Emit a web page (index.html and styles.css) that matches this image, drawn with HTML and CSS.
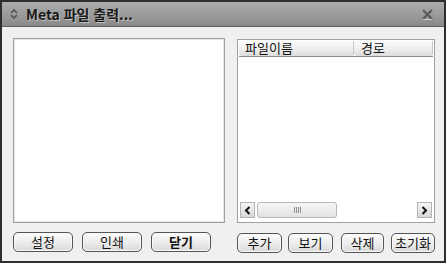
FILE: index.html
```html
<!DOCTYPE html>
<html lang="ko">
<head>
	<meta charset="UTF-8">
	<title>Meta 파일 출력</title>
	<link rel="stylesheet" href="styles.css">
</head>
<body>
	<div class="win">
		<div class="titlebar">
			<svg class="t_icon" width="8" height="12" viewBox="0 0 8 12"><path d="M1 5 L4 2 L7 5 M1 7 L4 10 L7 7" fill="none" stroke="#555" stroke-width="1.6"/></svg>
			<span class="t_text">Meta 파일 출력...</span>
			<svg class="t_close" width="11" height="11" viewBox="0 0 11 11"><path d="M1 1 L10 10 M10 1 L1 10" stroke="#5a5a5a" stroke-width="2.2"/><path d="M1 10.5 L10 10.5" stroke="#c8c8c8" stroke-width="1"/></svg>
		</div>
		<div class="content">
			<div class="col col_left">
				<div class="panel preview"></div>
				<div class="btns">
					<a href="javascript:;" class="btn w60">설정</a>
					<a href="javascript:;" class="btn w60">인쇄</a>
					<a href="javascript:;" class="btn w60 bold">닫기</a>
				</div>
			</div>
			<div class="col col_right">
				<div class="panel list">
					<div class="list_head">
						<div class="hcell h_name">파일이름</div>
						<div class="hcell h_path">경로</div>
					</div>
					<div class="list_body"></div>
					<div class="hscroll">
						<div class="sbtn"><svg width="7" height="9" viewBox="0 0 7 9"><path d="M5.5 1 L2 4.5 L5.5 8" fill="none" stroke="#111" stroke-width="2"/></svg></div>
						<div class="thumb"><span class="grip"></span></div>
						<div class="track"></div>
						<div class="sbtn"><svg width="7" height="9" viewBox="0 0 7 9"><path d="M1.5 1 L5 4.5 L1.5 8" fill="none" stroke="#111" stroke-width="2"/></svg></div>
					</div>
				</div>
				<div class="btns btns_r">
					<a href="javascript:;" class="btn" style="width:45px">추가</a>
					<a href="javascript:;" class="btn" style="width:45px">보기</a>
					<a href="javascript:;" class="btn" style="width:43px">삭제</a>
					<a href="javascript:;" class="btn" style="width:44px">초기화</a>
				</div>
			</div>
		</div>
	</div>
</body>
</html>
```

FILE: styles.css
```css
body,div {
	margin:0;
	padding:0;
}
a {
	text-decoration: none;
}
body {
	font-family: "Noto Sans CJK KR", "Noto Sans", sans-serif;
	font-size: 12px;
	color:#111;
	background:#fff;
}
.win {
	width:442px;
	height:259px;
	border:2px solid #2e2e2e;
	background:#f0f0f0;
	display:flex;
	flex-direction:column;
}
.titlebar {
	height:26px;
	border-bottom:1px solid #5e5e5e;
	background: linear-gradient(#acacac, #9c9c9c 50%, #8a8a8a);
	display:flex;
	align-items:center;
	padding:0 11px 0 8px;
}
.t_icon {
	margin-right:8px;
}
.t_text {
	font-family: "Noto Sans CJK KR", sans-serif;
	font-weight:bold;
	font-size:14px;
	color:#1a1a1a;
	text-shadow: 1px 1px 0 #c4c4c4;
	flex:1;
	line-height:1;
}
.t_close {
	margin-top:1px;
}
.content {
	flex:1;
	display:flex;
	gap:12px;
	padding:11px 9px 8px 11px;
}
.col {
	display:flex;
	flex-direction:column;
	flex:none;
}
.col_left {
	width:212px;
}
.col_right {
	width:198px;
}
.panel {
	height:185px;
	box-sizing:border-box;
	border:1px solid #a0a0a0;
	background:#fff;
}
.preview {
	box-shadow: inset 0 0 0 1px #e6e6e6, inset 0 0 0 2px #fff;
}
.list {
	margin-top:1px;
	height:184px;
	display:flex;
	flex-direction:column;
	padding:1px;
}
.list_head {
	display:flex;
	height:15px;
	border-bottom:1px solid #8c8c8c;
}
.hcell {
	height:15px;
	line-height:14px;
	font-size:13px;
	background: linear-gradient(#fbfbfb, #ececec 60%, #dcdcdc);
	border-radius:0 0 3px 3px;
	box-shadow: inset -1px 0 0 #c8c8c8;
	padding-left:6px;
	box-sizing:border-box;
}
.h_name {
	width:115px;
}
.h_path {
	flex:1;
	padding-left:7px;
}
.list_body {
	flex:1;
}
.hscroll {
	height:16px;
	display:flex;
	margin:0 1px 3px;
}
.sbtn {
	width:15px;
	height:16px;
	box-sizing:border-box;
	border:1px solid #b4b4b4;
	background: linear-gradient(#f4f4f4, #d8d8d8);
	display:flex;
	align-items:center;
	justify-content:center;
}
.thumb {
	width:80px;
	margin-left:2px;
	box-sizing:border-box;
	border:1px solid #b8b8b8;
	border-radius:3px;
	background: linear-gradient(#f6f6f6, #e2e2e2);
	display:flex;
	align-items:center;
	justify-content:center;
}
.grip {
	width:7px;
	height:6px;
	background: repeating-linear-gradient(90deg, #909090 0 1px, transparent 1px 2px);
}
.track {
	flex:1;
}
.btns {
	display:flex;
	gap:9px;
	margin-top:9px;
}
.btns_r {
	gap:6px;
	margin-top:10px;
}
.btns_r .btn:nth-child(3) {
	margin-left:2px;
}
.btns_r .btn:nth-child(4) {
	margin-left:1px;
}
.btn {
	height:20px;
	box-sizing:border-box;
	border:1px solid #555;
	border-radius:5px;
	background: linear-gradient(#fcfcfc, #ececec 55%, #d8d8d8);
	box-shadow: inset 0 0 0 1px #f8f8f8;
	color:#111;
	font-size:13px;
	line-height:18px;
	text-align:center;
	display:block;
}
.w60 {
	width:60px;
}
.bold {
	font-weight:bold;
}
```
